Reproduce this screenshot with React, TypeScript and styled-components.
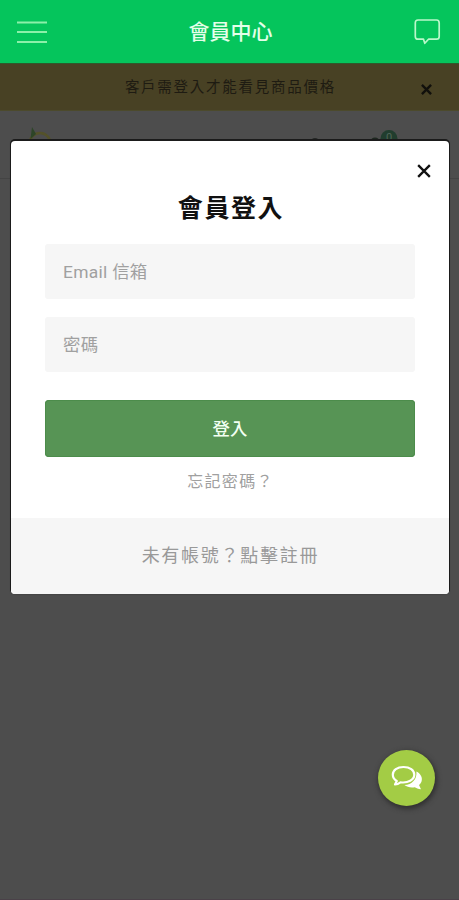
import React from "react";
import styled, { createGlobalStyle } from "styled-components";

const GlobalStyle = createGlobalStyle`
  * { box-sizing: border-box; }
  html, body { margin: 0; background: #4d4d4d; }
  body, input, button {
    font-family: Roboto, "Noto Sans CJK TC", sans-serif;
  }
  button { border: 0; background: none; padding: 0; cursor: pointer; }
`;

const Screen = styled.div`
  position: relative;
  display: flex;
  flex-direction: column;
  height: 900px;
  overflow: hidden;
  background: #4d4d4d;
  border-bottom: 1px solid #4a4148;
`;

const AppBar = styled.header`
  display: flex;
  align-items: center;
  justify-content: space-between;
  height: 63px;
  padding: 0 18px 0 17px;
  background: #05c55c;
  color: #e4ffe9;
`;

const AppTitle = styled.h1`
  margin: 0;
  font-size: 21px;
  font-weight: 500;
  line-height: 30px;
`;

const IconButton = styled.button`
  display: flex;
  color: inherit;
`;

const Banner = styled.div`
  display: flex;
  align-items: center;
  height: 48px;
  padding: 0 27px 0 40px;
  background: #484124;
  border-top: 1px solid #2e5a2c;
  border-bottom: 1px solid #4c4a2c;
  color: #1e1b12;
`;

const BannerText = styled.p`
  flex: 1;
  margin: 0;
  padding-top: 1px;
  text-align: center;
  font-size: 14.5px;
  line-height: 20px;
  letter-spacing: 1.75px;
`;

const BannerClose = styled.button`
  display: flex;
  margin-top: 5px;
  color: #11100c;
`;

const ShopBar = styled.div`
  display: flex;
  align-items: flex-start;
  justify-content: space-between;
  height: 68px;
  padding: 16px 58px 0 26px;
  border-bottom: 1px solid #444;
`;

const Dialog = styled.section`
  position: absolute;
  top: 141px;
  left: 11px;
  right: 10px;
  height: 453px;
  display: flex;
  flex-direction: column;
  overflow: hidden;
  border-radius: 4px;
  background: #fff;
  box-shadow: 0 -1px 0 1px #1b1b1b, 0 0 2px 0 #333;
`;

const DialogTop = styled.div`
  display: flex;
  justify-content: flex-end;
  height: 49px;
  padding: 23px 18px 0 0;
  color: #111;
`;

const DialogTitle = styled.h2`
  margin: 0;
  padding-left: 2px;
  height: 54px;
  text-align: center;
  font-size: 25px;
  font-weight: 700;
  line-height: 38px;
  letter-spacing: 1.6px;
  color: #111;
`;

const Form = styled.form`
  display: flex;
  flex-direction: column;
  flex: 1;
  padding: 0 34px;
`;

const Field = styled.input`
  width: 100%;
  height: 55px;
  margin: 0 0 18px;
  padding: 0 18px;
  border: 0;
  border-radius: 3px;
  outline: none;
  background: #f6f6f6;
  font-size: 17.4px;
  letter-spacing: 0.3px;
  color: #333;
  &::placeholder { color: #a0a0a0; opacity: 1; }
`;

const Submit = styled.button`
  height: 57px;
  margin-top: 10px;
  padding-bottom: 2px;
  border-radius: 4px;
  background: #579455;
  box-shadow: inset 0 0 0 1px #4c8c4b;
  color: #f2fff2;
  font-size: 17.4px;
  font-weight: 500;
`;

const Forgot = styled.button`
  align-self: center;
  margin-top: 13px;
  padding-left: 1px;
  font-size: 16px;
  line-height: 24px;
  letter-spacing: 1.3px;
  color: #a0a0a0;
`;

const Register = styled.button`
  height: 76px;
  padding: 0 0 4px 1px;
  background: #f6f6f6;
  font-size: 18px;
  letter-spacing: 1.75px;
  color: #999;
`;

const ChatButton = styled.button`
  position: absolute;
  right: 24px;
  bottom: 93px;
  display: flex;
  align-items: center;
  justify-content: center;
  width: 57px;
  height: 56px;
  border-radius: 50%;
  background: #a3cc45;
  box-shadow: 1px 2px 5px 1px #303030;
`;

const Cross = ({ size, weight }: { size: number; weight: number }) => (
  <svg width={size} height={size} viewBox="0 0 12 12" fill="none" stroke="currentColor" strokeWidth={weight}>
    <path d="M1 1 11 11M11 1 1 11" />
  </svg>
);

const MenuIcon = () => (
  <svg width="30" height="24" viewBox="0 0 30 24" stroke="#8cf0a9" strokeWidth="2">
    <path d="M0 2.5H30M0 12H30M0 22H30" />
  </svg>
);

const MessageIcon = () => (
  <svg width="27" height="26" viewBox="0 0 27 26" fill="none" stroke="#baf8ca" strokeWidth="1.7" strokeLinejoin="round">
    <path d="M4 1H22.5Q25.2 1 25.2 4V17.5Q25.2 20.2 22.5 20.2H14.5L10.8 24.3 9.5 20.2H4Q1.3 20.2 1.3 17.5V4Q1.3 1 4 1Z" />
  </svg>
);

const LogoMark = () => (
  <svg width="28" height="28" viewBox="0 0 28 28" fill="none">
    <circle cx="14" cy="16.5" r="10.5" stroke="#54522a" strokeWidth="2.5" />
    <path d="M6 0 4.5 12 10 7Z" fill="#2d4528" />
  </svg>
);

const ShopIcons = () => (
  <svg width="92" height="26" viewBox="0 0 92 26">
    <ellipse cx="6" cy="14.5" rx="4" ry="3.5" fill="#242725" />
    <ellipse cx="66" cy="14" rx="4" ry="3.5" fill="#1e2820" />
    <circle cx="80" cy="11.5" r="8.5" fill="#213d2e" />
    <text x="80" y="14" textAnchor="middle" fontFamily="Roboto" fontSize="11" fill="#506659">0</text>
  </svg>
);

const ChatIcon = () => (
  <svg width="32" height="26" viewBox="0 0 32 26">
    <path
      d="M25.4 6.5C29.5 8.5 31.8 12.3 30.6 16.3C30.2 17.8 29.2 19 28 20L30 24.2C27.3 24 25.2 23.1 23.6 22.3C19.7 23 16 22.1 13.4 20.1C20.8 19.6 26.3 14.5 25.4 6.5Z"
      fill="#fff"
    />
    <path
      d="M12.5 2C6.2 2 1.8 5.3 1.8 9.8C1.8 12.3 3.2 14.5 5.8 16L4 19.5C6.5 19.3 8.1 18.3 9.5 17.3C17 18.3 23.3 14.9 23.3 9.8C23.3 5.3 18.8 2 12.5 2Z"
      fill="#a3cc45"
      stroke="#fff"
      strokeWidth="2.2"
      strokeLinejoin="round"
    />
  </svg>
);

export default function App() {
  return (
    <>
      <GlobalStyle />
      <Screen>
        <AppBar>
          <IconButton aria-label="選單"><MenuIcon /></IconButton>
          <AppTitle>會員中心</AppTitle>
          <IconButton aria-label="訊息"><MessageIcon /></IconButton>
        </AppBar>
        <Banner>
          <BannerText>客戶需登入才能看見商品價格</BannerText>
          <BannerClose aria-label="關閉公告"><Cross size={11} weight={2.6} /></BannerClose>
        </Banner>
        <ShopBar>
          <LogoMark />
          <ShopIcons />
        </ShopBar>
        <Dialog role="dialog">
          <DialogTop>
            <IconButton aria-label="關閉"><Cross size={14} weight={2} /></IconButton>
          </DialogTop>
          <DialogTitle>會員登入</DialogTitle>
          <Form onSubmit={(e) => e.preventDefault()}>
            <Field type="email" placeholder="Email 信箱" />
            <Field type="password" placeholder="密碼" />
            <Submit type="submit">登入</Submit>
            <Forgot type="button">忘記密碼？</Forgot>
          </Form>
          <Register>未有帳號？點擊註冊</Register>
        </Dialog>
        <ChatButton aria-label="線上客服"><ChatIcon /></ChatButton>
      </Screen>
    </>
  );
}
